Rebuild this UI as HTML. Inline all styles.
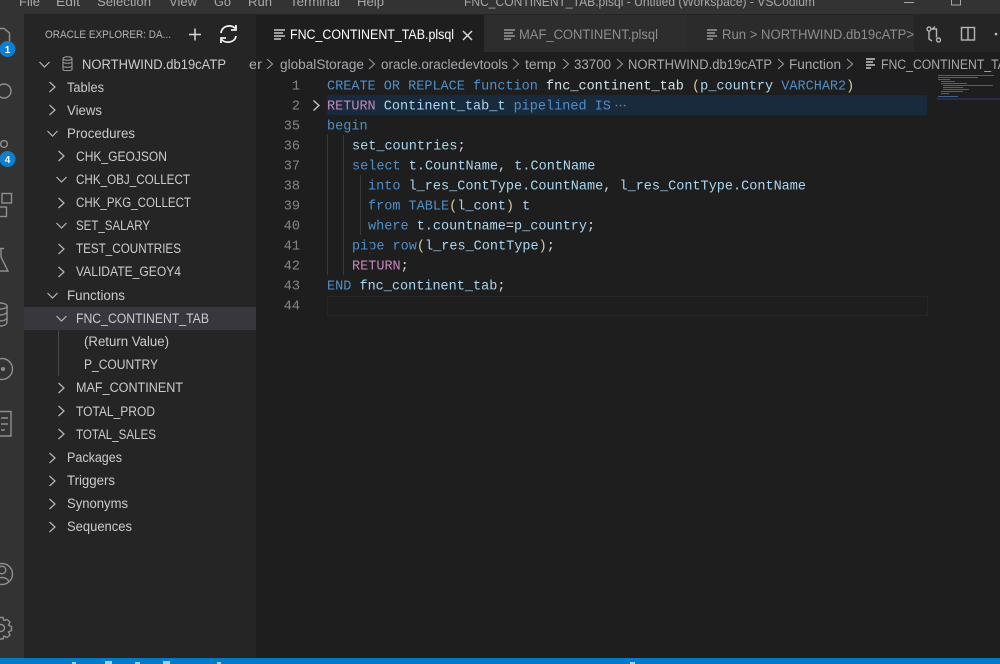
<!DOCTYPE html>
<html><head><meta charset="utf-8"><title>FNC_CONTINENT_TAB.plsql</title>
<style>
html,body{margin:0;padding:0;background:#1e1e1e;width:1000px;height:664px;overflow:hidden}
svg{display:block;filter:blur(.35px)}
.m{font:13px "Liberation Sans",sans-serif;fill:#a8a8a8}
.t{font:13.5px "Liberation Sans",sans-serif;fill:#cccccc}
.b{font:13.5px "Liberation Sans",sans-serif;fill:#a9a9a9}
.c{font:13.53px "Liberation Mono",monospace;fill:#a9d6f0;white-space:pre}
.n{font:13.53px "Liberation Mono",monospace;fill:#858585;text-anchor:end}
.k{fill:#4f8fc8}.p{fill:#c586c0}.w{fill:#d4d4d4}.y{fill:#d8d0a0}.f{fill:#cfe0e8}
.ch{fill:none;stroke:#b8b8b8;stroke-width:1.2}
.ic{fill:none;stroke:#8f8f8f;stroke-width:1.4}
</style></head><body>
<svg width="1000" height="664" viewBox="0 0 1000 664" xmlns="http://www.w3.org/2000/svg">
<rect width="1000" height="664" fill="#1e1e1e"/>
<rect width="1000" height="14" fill="#333333"/>
<rect y="14" width="24" height="644" fill="#333333"/>
<rect x="24" y="14" width="232" height="644" fill="#252526"/>
<rect x="256" y="14" width="744" height="38" fill="#252526"/>
<rect x="484" y="15" width="203" height="37" fill="#2d2d2d"/>
<rect x="687" y="15" width="227" height="37" fill="#2b2b2b"/>
<rect x="256" y="15" width="228" height="37" fill="#1e1e1e"/>
<rect x="24" y="307" width="232" height="23" fill="#37373d"/>
<rect x="327" y="95" width="600" height="20" fill="#182a3b"/>
<rect x="327.5" y="296.5" width="600" height="19" fill="none" stroke="#262626"/>
<rect y="658" width="1000" height="6" fill="#007acc"/>
<g fill="#9fd0f0"><rect x="72" y="662" width="4" height="2"/><rect x="105" y="661" width="7" height="3"/><rect x="135" y="662" width="5" height="2"/><rect x="163" y="661" width="7" height="3"/><rect x="217" y="662" width="4" height="2"/><rect x="630" y="662" width="5" height="2"/></g>

<!-- title bar -->
<g class="m">
<text x="19" y="6" textLength="21" lengthAdjust="spacingAndGlyphs">File</text>
<text x="56" y="6" textLength="24" lengthAdjust="spacingAndGlyphs">Edit</text>
<text x="97" y="6" textLength="54" lengthAdjust="spacingAndGlyphs">Selection</text>
<text x="169" y="6" textLength="28" lengthAdjust="spacingAndGlyphs">View</text>
<text x="214" y="6" textLength="17" lengthAdjust="spacingAndGlyphs">Go</text>
<text x="248" y="6" textLength="24" lengthAdjust="spacingAndGlyphs">Run</text>
<text x="290" y="6" textLength="50" lengthAdjust="spacingAndGlyphs">Terminal</text>
<text x="357" y="6" textLength="27" lengthAdjust="spacingAndGlyphs">Help</text>
<text x="464" y="6" textLength="351" lengthAdjust="spacingAndGlyphs">FNC_CONTINENT_TAB.plsql - Untitled (Workspace) - VSCodium</text>
</g>
<rect x="904" y="2" width="10" height="1" fill="#a8a8a8"/>
<rect x="951.5" y="-4" width="9" height="9" fill="none" stroke="#a8a8a8"/>

<!-- activity bar icons -->
<g class="ic">
<path d="M-2 28.5H4L9.5 33V43"/>
<circle cx="4" cy="91" r="7"/>
<circle cx="4" cy="144" r="3.4"/>
<rect x="2" y="193.5" width="9.5" height="9.5"/>
<rect x="-3" y="207" width="9.5" height="9.5"/>
<path d="M-4 248.5H4M1 249V257L8 271H-4"/>
<ellipse cx="0" cy="306" rx="7" ry="3"/>
<path d="M7 306V322C7 325 3 326 0 326M7 311C7 314 3 315 0 315M7 317C7 320 3 321 0 321"/>
<circle cx="2" cy="369" r="10.5"/>
<path d="M-1 411.5H11V436H-1M1 418H8M1 424H8M1 430H5"/>
<circle cx="2" cy="574" r="10.5"/>
<circle cx="2" cy="570" r="3.8"/>
<path d="M-5 582C-3 576 7 576 9 582"/>
<circle cx="1" cy="628" r="3.5"/>
<path d="M-1 617.5H3L4 620.5L7 619.5L10 622L8.5 625L11.5 626.5V630.5L8.5 632L10 635L7 637.5L4 636L3 639H-1"/>
</g>
<circle cx="3" cy="369" r="2" fill="#8f8f8f"/>
<circle cx="7.5" cy="49" r="8" fill="#0e7fd0"/>
<text x="7.5" y="53" font-family="Liberation Sans" font-size="10" font-weight="bold" fill="#fff" text-anchor="middle">1</text>
<circle cx="7.5" cy="159" r="8" fill="#0e7fd0"/>
<text x="7.5" y="163" font-family="Liberation Sans" font-size="10" font-weight="bold" fill="#fff" text-anchor="middle">4</text>

<!-- sidebar header -->
<text x="45" y="38" font-family="Liberation Sans" font-size="11" fill="#b4b4b4" textLength="126" lengthAdjust="spacingAndGlyphs">ORACLE EXPLORER: DA...</text>
<path d="M189 34.5H201M195 28.5V40.5" stroke="#d8d8d8" stroke-width="1.5" fill="none"/>
<path d="M221 33C222 25 232 24 236 29M236 25V30H231M236 36C235 43 225 44 221 39M221 43V38H226" stroke="#eeeeee" stroke-width="1.8" fill="none"/>

<!-- tree chevrons -->
<g class="ch">
<path d="M39.5 62L44.5 67L49.5 62"/>
<path d="M49.5 82L55 87L49.5 92M49.5 105L55 110L49.5 115"/>
<path d="M47.5 131L52.5 136L57.5 131"/>
<path d="M58.5 151L64 156L58.5 161"/>
<path d="M56.5 177L61.5 182L66.5 177"/>
<path d="M58.5 198L64 203L58.5 208"/>
<path d="M56.5 223L61.5 228L66.5 223"/>
<path d="M58.5 244L64 249L58.5 254M58.5 267L64 272L58.5 277"/>
<path d="M47.5 293L52.5 298L57.5 293"/>
<path d="M56.5 316L61.5 321L66.5 316"/>
<path d="M58.5 383L64 388L58.5 393M58.5 406L64 411L58.5 416M58.5 429L64 434L58.5 439"/>
<path d="M49.5 453L55 458L49.5 463M49.5 476L55 481L49.5 486M49.5 499L55 504L49.5 509M49.5 522L55 527L49.5 532"/>
</g>
<path d="M58.5 330V376" stroke="#4a4a4a" fill="none"/>
<g fill="none" stroke="#a0a0a0" stroke-width="1">
<ellipse cx="67.5" cy="58.5" rx="4.5" ry="1.8"/>
<path d="M63 58.5V69.5C63 71 72 71 72 69.5V58.5M63 62C63 63.6 72 63.6 72 62M63 66C63 67.6 72 67.6 72 66"/>
</g>

<!-- tree labels -->
<g class="t">
<text x="82" y="69" textLength="144" lengthAdjust="spacingAndGlyphs">NORTHWIND.db19cATP</text>
<text x="67" y="92" textLength="37" lengthAdjust="spacingAndGlyphs">Tables</text>
<text x="67" y="115" textLength="35" lengthAdjust="spacingAndGlyphs">Views</text>
<text x="67" y="138" textLength="68" lengthAdjust="spacingAndGlyphs">Procedures</text>
<text x="76" y="161" textLength="91" lengthAdjust="spacingAndGlyphs">CHK_GEOJSON</text>
<text x="76" y="184" textLength="114" lengthAdjust="spacingAndGlyphs">CHK_OBJ_COLLECT</text>
<text x="76" y="207" textLength="115" lengthAdjust="spacingAndGlyphs">CHK_PKG_COLLECT</text>
<text x="76" y="230" textLength="74" lengthAdjust="spacingAndGlyphs">SET_SALARY</text>
<text x="76" y="253" textLength="105" lengthAdjust="spacingAndGlyphs">TEST_COUNTRIES</text>
<text x="76" y="276" textLength="105" lengthAdjust="spacingAndGlyphs">VALIDATE_GEOY4</text>
<text x="67" y="300" textLength="58" lengthAdjust="spacingAndGlyphs">Functions</text>
<text x="76" y="323" textLength="133" lengthAdjust="spacingAndGlyphs">FNC_CONTINENT_TAB</text>
<text x="84" y="346" textLength="85" lengthAdjust="spacingAndGlyphs">(Return Value)</text>
<text x="84" y="369" textLength="74" lengthAdjust="spacingAndGlyphs">P_COUNTRY</text>
<text x="76" y="392" textLength="107" lengthAdjust="spacingAndGlyphs">MAF_CONTINENT</text>
<text x="76" y="416" textLength="79" lengthAdjust="spacingAndGlyphs">TOTAL_PROD</text>
<text x="76" y="439" textLength="80" lengthAdjust="spacingAndGlyphs">TOTAL_SALES</text>
<text x="67" y="462" textLength="55" lengthAdjust="spacingAndGlyphs">Packages</text>
<text x="67" y="485" textLength="48" lengthAdjust="spacingAndGlyphs">Triggers</text>
<text x="67" y="508" textLength="61" lengthAdjust="spacingAndGlyphs">Synonyms</text>
<text x="67" y="531" textLength="65" lengthAdjust="spacingAndGlyphs">Sequences</text>
</g>

<!-- tabs -->
<g stroke-width="1.6" fill="none">
<path d="M274 30H285M274 33H283M274 36H285M274 39H281" stroke="#c8c8c8"/>
<path d="M504 30H515M504 33H513M504 36H515M504 39H511" stroke="#9a9a9a"/>
<path d="M707 30H717M707 33H715M707 36H717M707 39H713" stroke="#9a9a9a"/>
<path d="M866 59H875M866 62H873M866 65H875M866 68H871" stroke="#c8c8c8"/>
</g>
<text x="290" y="39" font-family="Liberation Sans" font-size="13.5" fill="#ffffff" textLength="164" lengthAdjust="spacingAndGlyphs">FNC_CONTINENT_TAB.plsql</text>
<path d="M463 31L472 40M472 31L463 40" stroke="#d8d8d8" stroke-width="1.5" fill="none"/>
<text x="519" y="39" font-family="Liberation Sans" font-size="13.5" fill="#8e8e8e" textLength="139" lengthAdjust="spacingAndGlyphs">MAF_CONTINENT.plsql</text>
<text x="722" y="39" font-family="Liberation Sans" font-size="13.5" fill="#8e8e8e" textLength="192" lengthAdjust="spacingAndGlyphs">Run &gt; NORTHWIND.db19cATP&gt;</text>

<!-- editor actions -->
<g fill="none" stroke="#b5b5b5" stroke-width="1.4">
<circle cx="929" cy="29" r="2"/><circle cx="938.5" cy="40" r="2"/>
<path d="M931 29H936.5V37.5M929 31V39L932 41M935 26.5L932.5 29"/>
<rect x="961.5" y="27.5" width="13" height="12.5"/><path d="M968 27.5V40"/>
</g>
<circle cx="996" cy="34" r="1.3" fill="#c5c5c5"/>

<!-- breadcrumbs -->
<g class="b">
<text x="249" y="69" textLength="13" lengthAdjust="spacingAndGlyphs">er</text>
<text x="280" y="69" textLength="84" lengthAdjust="spacingAndGlyphs">globalStorage</text>
<text x="381" y="69" textLength="127" lengthAdjust="spacingAndGlyphs">oracle.oracledevtools</text>
<text x="525" y="69" textLength="31" lengthAdjust="spacingAndGlyphs">temp</text>
<text x="574" y="69" textLength="37" lengthAdjust="spacingAndGlyphs">33700</text>
<text x="628" y="69" textLength="144" lengthAdjust="spacingAndGlyphs">NORTHWIND.db19cATP</text>
<text x="789" y="69" textLength="52" lengthAdjust="spacingAndGlyphs">Function</text>
<text x="881" y="69" textLength="133" lengthAdjust="spacingAndGlyphs">FNC_CONTINENT_TAB</text>
</g>
<path d="M267 59L272.5 64L267 69M369 59L374.5 64L369 69M513 59L518.5 64L513 69M563 59L568.5 64L563 69M617 59L622.5 64L617 69M778 59L783.5 64L778 69M847 59L852.5 64L847 69" fill="none" stroke="#9a9a9a" stroke-width="1.1"/>

<rect x="256" y="52" width="1" height="22" fill="#1e1e1e"/>
<!-- line numbers -->
<g class="n">
<text x="300" y="89.4">1</text><text x="300" y="109.4">2</text><text x="300" y="129.4">35</text><text x="300" y="149.4">36</text><text x="300" y="169.4">37</text><text x="300" y="189.4">38</text><text x="300" y="209.4">39</text><text x="300" y="229.4">40</text><text x="300" y="249.4">41</text><text x="300" y="269.4">42</text><text x="300" y="289.4">43</text><text x="300" y="309.4">44</text>
</g>
<path d="M313.5 100.5L319 105.5L313.5 110.5" fill="none" stroke="#c5c5c5" stroke-width="1.4"/>
<path d="M327.5 135V275M343.5 135V275M360.5 175V235" stroke="#3a3a3a" fill="none"/>

<!-- code -->
<g class="c" xml:space="preserve">
<text x="327" y="89.4"><tspan class="k">CREATE OR REPLACE function</tspan> <tspan class="f">fnc_continent_tab</tspan> <tspan class="y">(</tspan>p_country <tspan class="k">VARCHAR2</tspan><tspan class="y">)</tspan></text>
<text x="327" y="109.4"><tspan class="p">RETURN</tspan> Continent_tab_t <tspan class="k">pipelined IS</tspan></text>
<text x="327" y="129.4"><tspan class="k">begin</tspan></text>
<text x="352" y="149.4">set_countries<tspan class="w">;</tspan></text>
<text x="352" y="169.4"><tspan class="k">select</tspan> t.CountName<tspan class="w">,</tspan> t.ContName</text>
<text x="368" y="189.4"><tspan class="k">into</tspan> l_res_ContType.CountName<tspan class="w">,</tspan> l_res_ContType.ContName</text>
<text x="368" y="209.4"><tspan class="k">from TABLE</tspan><tspan class="y">(</tspan>l_cont<tspan class="y">)</tspan> t</text>
<text x="368" y="229.4"><tspan class="k">where</tspan> t.countname<tspan class="w">=</tspan>p_country<tspan class="w">;</tspan></text>
<text x="352" y="249.4"><tspan class="k">pipe row</tspan><tspan class="y">(</tspan>l_res_ContType<tspan class="y">)</tspan><tspan class="w">;</tspan></text>
<text x="352" y="269.4"><tspan class="p">RETURN</tspan><tspan class="w">;</tspan></text>
<text x="327" y="289.4"><tspan class="k">END</tspan> fnc_continent_tab<tspan class="w">;</tspan></text>
</g>
<g fill="#7d7d7d"><circle cx="616.5" cy="105.5" r=".9"/><circle cx="620.5" cy="105.5" r=".9"/><circle cx="624.5" cy="105.5" r=".9"/></g>
<path d="M368 251.5H372M370 243V251" stroke="#151515" stroke-width="1" fill="none"/>

<!-- minimap -->
<g fill="#4b7fae" opacity=".75">
<rect x="938" y="75" width="56" height="1"/>
<rect x="938" y="77" width="40" height="1"/>
<rect x="938" y="79" width="12" height="1"/>
<rect x="941" y="81" width="14" height="1"/>
<rect x="941" y="83" width="26" height="1"/>
<rect x="943" y="85" width="50" height="1"/>
<rect x="943" y="87" width="20" height="1"/>
<rect x="943" y="89" width="26" height="1"/>
<rect x="941" y="91" width="22" height="1"/>
<rect x="941" y="93" width="8" height="1"/>
<rect x="938" y="96" width="20" height="1"/>
</g>
<rect x="937" y="98" width="63" height="2" fill="#2b2b4a"/>
</svg>
</body></html>
